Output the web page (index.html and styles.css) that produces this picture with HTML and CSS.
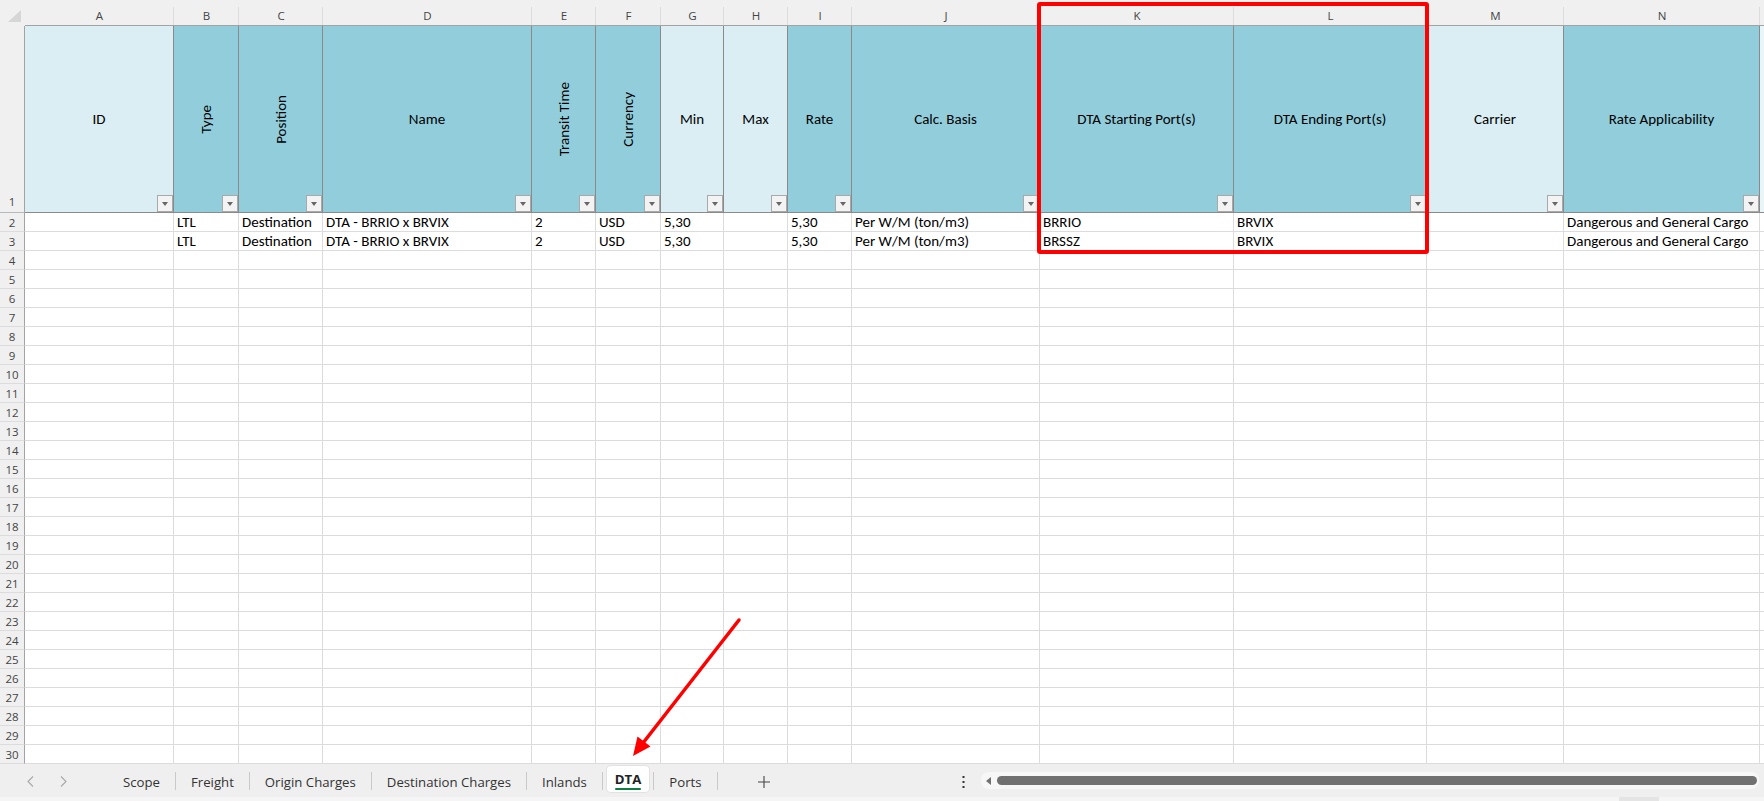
FILE: index.html
```html
<!DOCTYPE html>
<html lang="en">
<head>
  <meta charset="UTF-8">
  <title>DTA - Rate Sheet</title>
  <link rel="stylesheet" href="styles.css">
</head>
<body>

  <div class="sheet">
    <!-- Cells: row header + columns A..N + a sliver of O -->
    <div class="grid" id="grid">
      <div class="corner"><span class="corner-tri"></span></div>
      <div class="col-head">A</div>
      <div class="col-head">B</div>
      <div class="col-head">C</div>
      <div class="col-head">D</div>
      <div class="col-head">E</div>
      <div class="col-head">F</div>
      <div class="col-head">G</div>
      <div class="col-head">H</div>
      <div class="col-head">I</div>
      <div class="col-head">J</div>
      <div class="col-head">K</div>
      <div class="col-head">L</div>
      <div class="col-head">M</div>
      <div class="col-head">N</div>
      <div class="col-head"></div>

      <!-- Row 1: table headers -->
      <div class="rh rh-top">1</div>
      <div class="th light">ID<span class="filter"></span></div>
      <div class="th"><span class="vert">Type</span><span class="filter"></span></div>
      <div class="th"><span class="vert">Position</span><span class="filter"></span></div>
      <div class="th">Name<span class="filter"></span></div>
      <div class="th"><span class="vert">Transit Time</span><span class="filter"></span></div>
      <div class="th"><span class="vert">Currency</span><span class="filter"></span></div>
      <div class="th light">Min<span class="filter"></span></div>
      <div class="th light">Max<span class="filter"></span></div>
      <div class="th">Rate<span class="filter"></span></div>
      <div class="th">Calc. Basis<span class="filter"></span></div>
      <div class="th">DTA Starting Port(s)<span class="filter"></span></div>
      <div class="th">DTA Ending Port(s)<span class="filter"></span></div>
      <div class="th light">Carrier<span class="filter"></span></div>
      <div class="th">Rate Applicability<span class="filter"></span></div>
      <div class="th tail"></div>

      <!-- Row 2 -->
      <div class="rh">2</div>
      <div class="c"></div>
      <div class="c">LTL</div>
      <div class="c">Destination</div>
      <div class="c">DTA - BRRIO x BRVIX</div>
      <div class="c">2</div>
      <div class="c">USD</div>
      <div class="c">5,30</div>
      <div class="c"></div>
      <div class="c">5,30</div>
      <div class="c">Per W/M (ton/m3)</div>
      <div class="c">BRRIO</div>
      <div class="c">BRVIX</div>
      <div class="c"></div>
      <div class="c">Dangerous and General Cargo</div>
      <div class="c"></div>

      <!-- Row 3 -->
      <div class="rh">3</div>
      <div class="c"></div>
      <div class="c">LTL</div>
      <div class="c">Destination</div>
      <div class="c">DTA - BRRIO x BRVIX</div>
      <div class="c">2</div>
      <div class="c">USD</div>
      <div class="c">5,30</div>
      <div class="c"></div>
      <div class="c">5,30</div>
      <div class="c">Per W/M (ton/m3)</div>
      <div class="c">BRSSZ</div>
      <div class="c">BRVIX</div>
      <div class="c"></div>
      <div class="c">Dangerous and General Cargo</div>
      <div class="c"></div>
      <!-- rows 4..30 are added by the script below -->
    </div>

    <!-- Sheet tabs + horizontal scrollbar -->
    <div class="tabbar">
      <div class="tabs-area">
        <div class="nav">
          <svg width="7" height="11" viewBox="0 0 7 11"><path d="M6 0.5 L1 5.5 L6 10.5" fill="none" stroke="#a8a8a8" stroke-width="1.1"/></svg>
          <svg width="7" height="11" viewBox="0 0 7 11"><path d="M1 0.5 L6 5.5 L1 10.5" fill="none" stroke="#a8a8a8" stroke-width="1.1"/></svg>
        </div>
        <div class="tab">Scope</div>
        <span class="sep"></span>
        <div class="tab">Freight</div>
        <span class="sep"></span>
        <div class="tab">Origin Charges</div>
        <span class="sep"></span>
        <div class="tab">Destination Charges</div>
        <span class="sep"></span>
        <div class="tab">Inlands</div>
        <span class="sep"></span>
        <div class="tab active">DTA</div>
        <span class="sep"></span>
        <div class="tab">Ports</div>
        <span class="sep"></span>
        <div class="add">
          <svg width="12" height="12" viewBox="0 0 12 12"><path d="M6 0 V12 M0 6 H12" stroke="#444" stroke-width="1.1"/></svg>
        </div>
      </div>
      <div class="more">
        <svg width="3" height="12" viewBox="0 0 3 12"><rect x="0.5" y="0" width="2" height="2" fill="#333"/><rect x="0.5" y="5" width="2" height="2" fill="#333"/><rect x="0.5" y="10" width="2" height="2" fill="#333"/></svg>
      </div>
      <div class="hscroll">
        <span class="hscroll-arrow"></span>
        <span class="hscroll-thumb"></span>
      </div>
    </div>
    <div class="status"><span class="status-bit"></span></div>
  </div>

  <!-- Annotation overlays -->
  <div class="callout"></div>
  <svg class="callout-arrow" width="1764" height="801" viewBox="0 0 1764 801">
    <line x1="739" y1="620" x2="643" y2="743" stroke="#ff0000" stroke-width="3.5" stroke-linecap="round"/>
    <polygon points="633,756 637.5,736.5 650.5,746.5" fill="#ff0000"/>
  </svg>

  <script>
    /* Empty rows 4 to 30 */
    const grid = document.getElementById('grid');
    for (let r = 4; r <= 30; r++) {
      const head = document.createElement('div');
      head.className = 'rh';
      head.textContent = r;
      grid.appendChild(head);
      for (let c = 0; c < 15; c++) {
        const cell = document.createElement('div');
        cell.className = 'c';
        grid.appendChild(cell);
      }
    }
  </script>
</body>
</html>
```

FILE: styles.css
```css
* {
  box-sizing: border-box;
  margin: 0;
  padding: 0;
}

html, body {
  width: 1764px;
  height: 801px;
  overflow: hidden;
  background-color: #fff;
}

body {
  position: relative;
  font-family: Calibri, Carlito, Lato, sans-serif;
  font-size: 15px;
  color: #000;
}

.sheet {
  display: flex;
  flex-direction: column;
  height: 801px;
}

/* The worksheet grid */
.grid {
  display: grid;
  grid-template-columns: 25px 149px 65px 84px 209px 64px 65px 63px 64px 64px 188px 194px 193px 137px 196px 1fr;
  grid-template-rows: 26px 187px repeat(29, 19px);
}

.corner {
  background-color: #f0f0f0;
  position: relative;
}

.corner-tri {
  position: absolute;
  left: 8px;
  top: 10px;
  width: 13px;
  height: 12px;
  background-color: #d6d6d6;
  clip-path: polygon(100% 0, 100% 100%, 0 100%);
}

/* Column letters */
.col-head {
  background: linear-gradient(#dcdcdc, #dcdcdc) right bottom / 1px 18px no-repeat, #f0f0f0;
  border-bottom: 1px solid #a3a3a3;
  font-family: "Segoe UI", "Open Sans", sans-serif;
  font-size: 11.5px;
  color: #444;
  text-align: center;
  padding-top: 7px;
  line-height: 17px;
}

/* Row numbers */
.rh {
  background-color: #f0f0f0;
  border-right: 1px solid #a3a3a3;
  border-bottom: 1px solid #dcdcdc;
  font-family: "Segoe UI", "Open Sans", sans-serif;
  font-size: 11.5px;
  color: #444;
  text-align: center;
  line-height: 19px;
}

.rh-top {
  display: flex;
  align-items: flex-end;
  justify-content: center;
  padding-bottom: 1px;
  border-bottom-color: #b8b8b8;
}

/* Header cells of the table */
.th {
  position: relative;
  display: flex;
  align-items: center;
  justify-content: center;
  text-align: center;
  background-color: #92cddc;
  border-right: 1px solid #8a8a8a;
  border-bottom: 1px solid #8a8a8a;
  white-space: nowrap;
}

.th.light {
  background-color: #daeef3;
}

.th.tail {
  background-color: #eaf5f8;
  border-right: none;
}

.vert {
  writing-mode: vertical-rl;
  transform: rotate(180deg);
}

/* Autofilter dropdown button */
.filter {
  position: absolute;
  right: 0;
  bottom: 0;
  width: 16px;
  height: 17px;
  background-color: #f3f3f3;
  border: 1px solid #a9a9a9;
}

.filter::after {
  content: "";
  position: absolute;
  left: 4px;
  top: 6px;
  border-left: 3.5px solid transparent;
  border-right: 3.5px solid transparent;
  border-top: 4px solid #666;
}

/* Plain cells */
.c {
  border-right: 1px solid #dcdcdc;
  border-bottom: 1px solid #dcdcdc;
  padding: 0 3px;
  line-height: 18px;
  white-space: nowrap;
}

/* Tab strip at the bottom */
.tabbar {
  display: flex;
  align-items: center;
  height: 33px;
  background-color: #efefef;
  font-family: "Segoe UI", "Open Sans", sans-serif;
  font-size: 13.2px;
  color: #333;
}

.tabs-area {
  flex: 0 0 950px;
  display: flex;
  align-items: center;
  height: 100%;
}

.nav {
  width: 108px;
  display: flex;
  gap: 26px;
  padding-left: 27px;
  padding-top: 2px;
}

.tab {
  padding: 0 15px;
  padding-top: 2px;
}

.tab.active {
  position: relative;
  align-self: flex-start;
  margin: 2px 4px 0;
  padding: 0 8px;
  height: 26px;
  line-height: 26px;
  background-color: #fff;
  border-radius: 4px;
  box-shadow: 0 0 0 1px #e2e2e2;
  font-weight: bold;
  color: #222;
}

.tab.active::after {
  content: "";
  position: absolute;
  left: 8px;
  right: 8px;
  bottom: 2px;
  height: 2px;
  border-radius: 1px;
  background-color: #107c41;
}

.sep {
  width: 1px;
  height: 18px;
  background-color: #c9c9c9;
}

.add {
  margin-left: 40px;
  padding-top: 4px;
}

.more {
  flex: 0 0 26px;
  display: flex;
  justify-content: center;
  padding-top: 2px;
}

/* Horizontal scrollbar */
.hscroll {
  flex: 1;
  margin: 0 5px;
  height: 17px;
  display: flex;
  align-items: center;
  background-color: #f7f7f7;
  border-radius: 8px;
}

.hscroll-arrow {
  margin-left: 5px;
  border-top: 4px solid transparent;
  border-bottom: 4px solid transparent;
  border-right: 5px solid #707070;
}

.hscroll-thumb {
  flex: 1;
  height: 9px;
  margin-left: 6px;
  margin-right: 2px;
  border-radius: 5px;
  background-color: #707070;
}

.status {
  flex: 1;
  position: relative;
  background-color: #f5f5f5;
}

.status-bit {
  position: absolute;
  left: 1619px;
  top: 0;
  width: 40px;
  height: 100%;
  background-color: #e4e4e4;
}

/* Red annotation box and arrow */
.callout {
  position: absolute;
  left: 1037px;
  top: 2px;
  width: 392px;
  height: 252px;
  border: 4px solid #ff0000;
  border-radius: 3px;
}

.callout-arrow {
  position: absolute;
  left: 0;
  top: 0;
  pointer-events: none;
}
```
